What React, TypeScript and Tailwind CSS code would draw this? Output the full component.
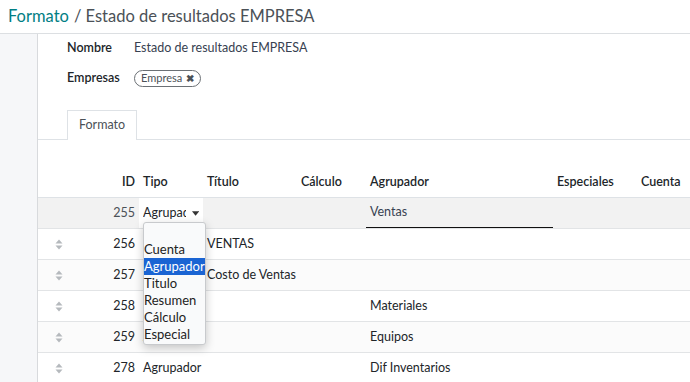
import React from 'react';

const font = { fontFamily: 'Lato, "Noto Sans", sans-serif' };

const cols = 'grid grid-cols-[101px_64px_94px_69px_187px_84px_1fr]';

const SortHandle = () => (
  <svg width="8" height="11" viewBox="0 0 8 11" className="text-[#b5b9bd]">
    <path d="M4 0.5 L7.5 4.5 H0.5 Z" fill="currentColor" />
    <path d="M4 10.5 L7.5 6.5 H0.5 Z" fill="currentColor" />
  </svg>
);

interface RowProps {
  id: number;
  tipo?: string;
  titulo?: string;
  agrupador?: string;
  shade?: boolean;
}

const Row: React.FC<RowProps> = ({ id, tipo, titulo, agrupador, shade }) => (
  <div className={`${cols} h-[31px] items-center border-b border-[#e2e4e6] text-[12.5px] text-[#212529] whitespace-nowrap ${shade ? 'bg-[#fbfbfb]' : 'bg-white'}`}>
    <div className="flex items-center justify-between pl-[17px] pr-1">
      <SortHandle />
      <span>{id}</span>
    </div>
    <div className="pl-1">{tipo}</div>
    <div className="pl-1">{titulo}</div>
    <div className="pl-1" />
    <div className="pl-1">{agrupador}</div>
    <div className="pl-1" />
    <div className="pl-1" />
  </div>
);

const options = ['', 'Cuenta', 'Agrupador', 'Titulo', 'Resumen', 'Cálculo', 'Especial'];

export default function App() {
  return (
    <div className="w-[690px] h-[382px] overflow-hidden bg-white" style={font}>
      <div className="h-[34px] border-b border-[#dcdfe2] flex items-center pl-2 text-[16.5px]">
        <span className="text-[#017e84]">Formato</span>
        <span className="text-[#4b5157] ml-[5px]">/ Estado de resultados EMPRESA</span>
      </div>
      <div className="flex h-[348px]">
        <div className="w-[38px] shrink-0 bg-[#f6f7f9] border-r border-[#d8dadd]" />
        <div className="flex-1 relative">
          <div className="pl-[29px] pt-[4px] text-[12.5px] text-[#212529]">
            <div className="flex items-center h-[20px]">
              <span className="w-[67px] font-semibold">Nombre</span>
              <span className="text-[#374151]">Estado de resultados EMPRESA</span>
            </div>
            <div className="flex items-center h-[20px] mt-[10px]">
              <span className="w-[67px] font-semibold">Empresas</span>
              <span className="flex items-center gap-1 h-[17px] px-[6px] border border-[#6b7075] rounded-full text-[11px] text-[#4b5157]">
                Empresa <span className="text-[10px] font-bold">✖</span>
              </span>
            </div>
          </div>
          <div className="mt-[22px] border-b border-[#dee2e6] pl-[29px] flex">
            <div className="h-[30px] px-[11px] flex items-center border border-b-0 border-[#dee2e6] bg-white -mb-px text-[12.5px] text-[#4b5157]">
              Formato
            </div>
          </div>
          <div className="mt-[28px]">
            <div className={`${cols} h-[30px] items-center border-b border-[#dee2e6] text-[12.5px] font-semibold text-[#212529]`}>
              <div className="text-right pr-1">ID</div>
              <div className="pl-1">Tipo</div>
              <div className="pl-1">Título</div>
              <div className="pl-1">Cálculo</div>
              <div className="pl-1">Agrupador</div>
              <div className="pl-1">Especiales</div>
              <div className="pl-1">Cuenta</div>
            </div>
            <div className={`${cols} h-[31px] items-center border-b border-[#e2e4e6] bg-[#f2f2f2] text-[12.5px] text-[#212529]`}>
              <div className="text-right pr-1 text-[#4b5157]">255</div>
              <div className="h-full bg-white flex items-center pl-1 pr-[4px]">
                <span className="overflow-hidden whitespace-nowrap w-[48px]">Agrupador</span>
                <svg width="8" height="5" viewBox="0 0 8 5" className="ml-[6px]">
                  <path d="M0 0 H8 L4 5 Z" fill="#333" />
                </svg>
              </div>
              <div />
              <div />
              <div className="h-full flex items-center pl-1 border-b border-[#111] text-[#374151]">Ventas</div>
              <div />
              <div />
            </div>
            <Row id={256} titulo="VENTAS" />
            <Row id={257} titulo="Costo de Ventas" shade />
            <Row id={258} agrupador="Materiales" />
            <Row id={259} tipo="Agrupador" agrupador="Equipos" shade />
            <Row id={278} tipo="Agrupador" agrupador="Dif Inventarios" />
          </div>
          <div className="absolute left-[105px] top-[188px] w-[63px] bg-[#f9fafb] border border-[#c8cacd] rounded-[3px] shadow-[0_3px_10px_rgba(0,0,0,0.22)] py-[1px] text-[13px] leading-[17px] text-[#222]">
            {options.map((o, i) => (
              <div key={i} className={`h-[17px] whitespace-nowrap ${o === 'Agrupador' ? 'bg-[#1a64d3] text-white' : ''}`}>
                {o}
              </div>
            ))}
          </div>
        </div>
      </div>
    </div>
  );
}
